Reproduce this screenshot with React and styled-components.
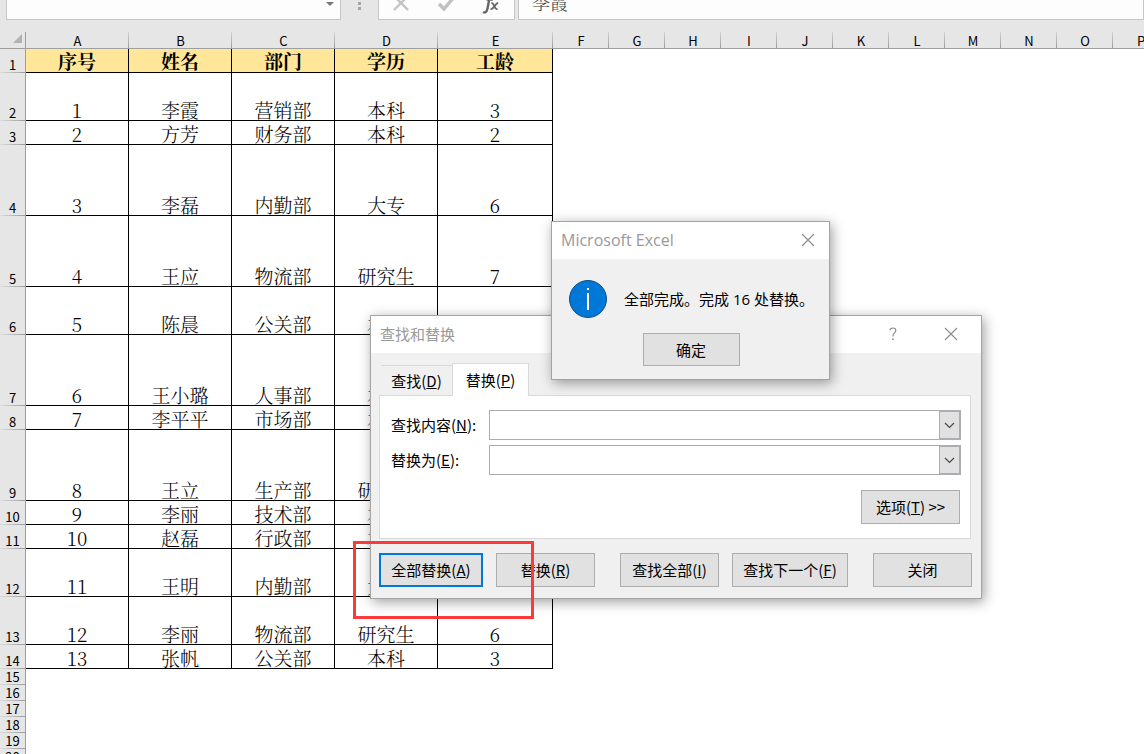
import React from "react";
import styled, { createGlobalStyle } from "styled-components";

const uiFont = `"Noto Sans CJK SC", sans-serif`;
const latinUiFont = `"Open Sans", "Noto Sans CJK SC", sans-serif`;
const cellFont = `"Noto Serif CJK SC", "Liberation Serif", "Noto Sans CJK SC", serif`;

const GlobalStyle = createGlobalStyle`
  *, *::before, *::after { box-sizing: border-box; }
  body { margin: 0; background: #fff; font-family: ${uiFont}; color: #000; }
  button, input { font: inherit; color: inherit; }
`;

const Workbook = styled.main`
  position: relative;
  height: 100vh;
  overflow: hidden;
  background: #fff;
`;

/* Formula bar */
const FormulaBar = styled.div`
  display: flex;
  align-items: flex-end;
  height: 32px;
  padding: 0 0 12px 6px;
  overflow: hidden;
  background: #e6e6e6;
`;

const BarBox = styled.div`
  display: flex;
  align-items: center;
  flex: ${(p) => (p.$width ? `0 0 ${p.$width}px` : "1 1 auto")};
  height: 35px;
  border: 1px solid #c6c6c6;
  background: #fdfdfd;
`;

const BarInput = styled.input`
  flex: 1;
  min-width: 0;
  height: 32px;
  padding: 0 0 2px 13px;
  border: 0;
  background: transparent;
  color: #444;
  font-family: ${cellFont};
  font-size: 18px;
  font-weight: 300;
  line-height: 24px;
`;

const BarButton = styled.button`
  display: flex;
  align-items: center;
  justify-content: center;
  width: ${(p) => p.$width}px;
  height: 32px;
  padding: 0;
  border: 0;
  background: transparent;
`;

const Grip = styled.svg`
  flex: 0 0 37px;
  height: 33px;
`;

const BarGap = styled.div`
  flex: 0 0 3px;
`;

/* Sheet */
const Sheet = styled.table`
  width: 1169px;
  table-layout: fixed;
  border-collapse: separate;
  border-spacing: 0;
`;

const Corner = styled.td`
  height: 17px;
  padding: 0 3px 3px 0;
  border-right: 1px solid #9f9f9f;
  border-bottom: 1px solid #9f9f9f;
  background: #e6e6e6;
  line-height: 0;
  text-align: right;
`;

const ColumnHead = styled.th`
  height: 17px;
  padding: 2px 0 0;
  border-bottom: 1px solid #9f9f9f;
  background:
    linear-gradient(#d4d4d4, #9b9b9b) right / 1px 100% no-repeat,
    #e6e6e6;
  font-size: 13px;
  font-weight: 400;
  line-height: 14px;
`;

const RowHead = styled.th`
  height: ${(p) => p.$height}px;
  padding: 0 0 1px;
  border-right: 1px solid #9f9f9f;
  background:
    linear-gradient(90deg, #dcdcdc, #9b9b9b) bottom / 100% 1px no-repeat,
    #e6e6e6;
  font-size: 13px;
  font-weight: 400;
  line-height: 15px;
  vertical-align: bottom;
`;

const Cell = styled.td`
  height: ${(p) => p.$height}px;
  padding: 0;
  border-right: 1px solid #000;
  border-bottom: 1px solid #000;
  background: ${(p) => (p.$title ? "#ffe699" : "#fff")};
  font-family: ${cellFont};
  font-size: 19px;
  font-weight: ${(p) => (p.$title ? 700 : 300)};
  line-height: ${(p) => (p.$title ? 23 : 21)}px;
  text-align: center;
  vertical-align: bottom;
`;

const Blank = styled.td`
  padding: 0;
`;

/* Dialogs */
const Window = styled.section`
  position: absolute;
  left: ${(p) => p.$left}px;
  top: ${(p) => p.$top}px;
  width: ${(p) => p.$width}px;
  border: 1px solid #a3a3a3;
  background: #f0f0f0;
  box-shadow: 2px 3px 12px rgba(0, 0, 0, 0.38);
  font-size: 15px;
  line-height: 22px;
`;

const TitleBar = styled.header`
  display: flex;
  align-items: center;
  height: 37px;
  padding: 0 0 2px 9px;
  background: #fff;
  color: #999;
`;

const WindowTitle = styled.h2`
  flex: 1;
  margin: 0;
  font-family: ${(p) => (p.$latin ? latinUiFont : uiFont)};
  font-size: ${(p) => (p.$latin ? 16 : 15)}px;
  font-weight: 400;
`;

const TitleButton = styled.button`
  display: flex;
  align-items: center;
  justify-content: center;
  width: ${(p) => p.$width}px;
  height: 35px;
  padding: 0;
  border: 0;
  background: transparent;
`;

const PushButton = styled.button`
  width: ${(p) => p.$width || 99}px;
  height: ${(p) => p.$height || 34}px;
  padding: 0;
  border: ${(p) => (p.$primary ? "2px solid #0078d7" : "1px solid #adadad")};
  background: #e1e1e1;
  line-height: 22px;
  white-space: nowrap;
`;

const FindBody = styled.div`
  padding: 10px 9px 11px 8px;
`;

const TabStrip = styled.div`
  position: relative;
  display: flex;
  align-items: flex-end;
  height: 33px;
  margin-bottom: -1px;
  padding-left: 2px;
`;

const Tab = styled.button`
  width: ${(p) => (p.$active ? 77 : 71)}px;
  height: ${(p) => (p.$active ? 33 : 30)}px;
  margin-bottom: ${(p) => (p.$active ? 0 : 1)}px;
  padding: 0;
  border: solid #d9d9d9;
  border-width: ${(p) => (p.$active ? "1px 1px 0" : "1px 0 0")};
  background: ${(p) => (p.$active ? "#fff" : "#f0f0f0")};
  line-height: 22px;
`;

const TabPanel = styled.div`
  display: grid;
  grid-template-columns: 98px 1fr;
  row-gap: 5px;
  align-items: center;
  margin-right: 1px;
  padding: 14px 9px 14px 11px;
  border: 1px solid #d9d9d9;
  background: #fff;
`;

const Combo = styled.div`
  display: flex;
  height: 30px;
  border: 1px solid #abadb3;
  background: #fff;
`;

const ComboInput = styled.input`
  flex: 1;
  min-width: 0;
  padding: 0 6px;
  border: 0;
  background: transparent;
`;

const ComboButton = styled.button`
  display: flex;
  align-items: center;
  justify-content: center;
  width: 21px;
  padding: 0;
  border: 1px solid #abadb3;
  background: #e1e1e1;
`;

const OptionsRow = styled.div`
  grid-column: 1 / -1;
  display: flex;
  justify-content: flex-end;
  padding: 10px 1px 0 0;
`;

const Actions = styled.footer`
  display: flex;
  justify-content: space-between;
  margin-top: 14px;
`;

const ActionGroup = styled.div`
  display: flex;
  gap: 13px;
`;

const MessageBody = styled.div`
  display: flex;
  flex-direction: column;
  align-items: center;
  gap: 15px;
  padding: 21px 16px 13px 17px;
`;

const Message = styled.div`
  display: flex;
  align-items: center;
  align-self: stretch;
  gap: 17px;
  white-space: nowrap;
`;

const InfoIcon = styled.svg`
  flex: none;
  width: 38px;
  height: 38px;
`;

const MessageText = styled.p`
  margin: 0;
  font-family: ${latinUiFont};
`;

const Highlight = styled.div`
  position: absolute;
  left: 353px;
  top: 541px;
  width: 181px;
  height: 78px;
  border: 3px solid #fb3a3a;
  pointer-events: none;
`;

const titles = ["序号", "姓名", "部门", "学历", "工龄"];

const rows = [
  [48, "1", "李霞", "营销部", "本科", "3"],
  [24, "2", "方芳", "财务部", "本科", "2"],
  [71, "3", "李磊", "内勤部", "大专", "6"],
  [71, "4", "王应", "物流部", "研究生", "7"],
  [48, "5", "陈晨", "公关部", "本科", "5"],
  [71, "6", "王小璐", "人事部", "本科", "4"],
  [24, "7", "李平平", "市场部", "本科", "3"],
  [71, "8", "王立", "生产部", "研究生", "5"],
  [24, "9", "李丽", "技术部", "本科", "4"],
  [24, "10", "赵磊", "行政部", "本科", "2"],
  [48, "11", "王明", "内勤部", "大专", "3"],
  [48, "12", "李丽", "物流部", "研究生", "6"],
  [24, "13", "张帆", "公关部", "本科", "3"],
];

const dataWidths = [103, 103, 103, 103, 115];
const extraColumns = "FGHIJKLMNOP".split("");
const emptyRows = [15, 16, 17, 18, 19, 20];

function CloseIcon() {
  return (
    <svg width="14" height="14" viewBox="0 0 14 14" aria-hidden="true">
      <path d="M1 1 L13 13 M13 1 L1 13" stroke="#8c8c8c" strokeWidth="1.1" fill="none" />
    </svg>
  );
}

function HelpIcon() {
  return (
    <svg width="8" height="14" viewBox="0 0 8 14" aria-hidden="true">
      <path d="M1 3.2 C1.2 0.4 6.8 0.1 6.8 3.4 C6.8 6 3.9 6 3.9 9.4" stroke="#8c8c8c" strokeWidth="1.2" fill="none" />
      <circle cx="3.9" cy="12.2" r="0.9" fill="#8c8c8c" />
    </svg>
  );
}

function ComboField({ id, label, accessKey }) {
  return (
    <>
      <label htmlFor={id}>
        {label}(<u>{accessKey}</u>):
      </label>
      <Combo>
        <ComboInput id={id} type="text" />
        <ComboButton type="button" aria-label={label}>
          <svg width="11" height="7" viewBox="0 0 11 7" aria-hidden="true">
            <path d="M1 1 L5.5 5.5 L10 1" stroke="#444" strokeWidth="1.1" fill="none" />
          </svg>
        </ComboButton>
      </Combo>
    </>
  );
}

function TopBar() {
  return (
    <FormulaBar>
      <BarBox $width={335}>
        <BarInput aria-label="名称框" type="text" />
        <BarButton $width={21} type="button" aria-label="名称">
          <svg width="8" height="12" viewBox="0 0 8 12" aria-hidden="true">
            <path d="M0 5 H8 L4 9 Z" fill="#777" />
          </svg>
        </BarButton>
      </BarBox>
      <Grip viewBox="0 0 37 33" aria-hidden="true">
        <path d="M17 15h3v3h-3z M17 20h3v3h-3z" fill="#a6a6a6" />
      </Grip>
      <BarBox $width={137}>
        <BarButton $width={43} type="button" aria-label="取消">
          <svg width="18" height="18" viewBox="0 0 18 18" aria-hidden="true">
            <path d="M2 2 L16 16 M16 2 L2 16" stroke="#c4c4c4" strokeWidth="2.4" fill="none" />
          </svg>
        </BarButton>
        <BarButton $width={48} type="button" aria-label="输入">
          <svg width="20" height="18" viewBox="0 0 20 18" aria-hidden="true">
            <path d="M3 10 L8 15 L18 3" stroke="#c0c0c0" strokeWidth="3.4" fill="none" />
          </svg>
        </BarButton>
        <BarButton $width={41} type="button" aria-label="插入函数">
          <svg width="20" height="24" viewBox="0 0 20 24" aria-hidden="true">
            <path d="M13 3.5 C10 1.5 8.8 5 8.2 8.5 L6.6 17 C6 20.5 4.4 22.2 2 21" stroke="#666" strokeWidth="2.4" fill="none" />
            <path d="M5.5 9 H12" stroke="#666" strokeWidth="1.4" />
            <path d="M10.4 12.4 C13 11 13.2 19 16.6 18 M17.2 12 C14.5 11.6 13 18.8 9.6 18" stroke="#666" strokeWidth="1.8" fill="none" />
          </svg>
        </BarButton>
      </BarBox>
      <BarGap />
      <BarBox>
        <BarInput aria-label="编辑栏" type="text" defaultValue="李霞" />
      </BarBox>
    </FormulaBar>
  );
}

function Grid() {
  return (
    <Sheet>
      <colgroup>
        <col width="26" />
        {dataWidths.map((w, i) => (
          <col key={i} width={w} />
        ))}
        {extraColumns.map((c) => (
          <col key={c} width="56" />
        ))}
      </colgroup>
      <thead>
        <tr>
          <Corner>
            <svg width="9" height="9" viewBox="0 0 9 9" aria-hidden="true">
              <path d="M9 0 V9 H0 Z" fill="#b2b2b2" />
            </svg>
          </Corner>
          {["A", "B", "C", "D", "E", ...extraColumns].map((c) => (
            <ColumnHead key={c} scope="col">{c}</ColumnHead>
          ))}
        </tr>
      </thead>
      <tbody>
        <tr>
          <RowHead $height={24} scope="row">1</RowHead>
          {titles.map((t) => (
            <Cell key={t} $height={24} $title>{t}</Cell>
          ))}
        </tr>
        {rows.map(([height, ...values], r) => (
          <tr key={r}>
            <RowHead $height={height} scope="row">{r + 2}</RowHead>
            {values.map((v, i) => (
              <Cell key={i} $height={height}>{v}</Cell>
            ))}
          </tr>
        ))}
        {emptyRows.map((n) => (
          <tr key={n}>
            <RowHead $height={16} scope="row">{n}</RowHead>
            <Blank colSpan={16} />
          </tr>
        ))}
      </tbody>
    </Sheet>
  );
}

function FindDialog() {
  return (
    <Window role="dialog" aria-labelledby="find-title" $left={370} $top={315} $width={612}>
      <TitleBar>
        <WindowTitle id="find-title">查找和替换</WindowTitle>
        <TitleButton $width={56} type="button" aria-label="帮助"><HelpIcon /></TitleButton>
        <TitleButton $width={60} type="button" aria-label="关闭"><CloseIcon /></TitleButton>
      </TitleBar>
      <FindBody>
        <TabStrip role="tablist">
          <Tab role="tab" type="button" aria-selected="false">查找(<u>D</u>)</Tab>
          <Tab role="tab" type="button" aria-selected="true" $active>替换(<u>P</u>)</Tab>
        </TabStrip>
        <TabPanel role="tabpanel">
          <ComboField id="find-what" label="查找内容" accessKey="N" />
          <ComboField id="replace-with" label="替换为" accessKey="E" />
          <OptionsRow>
            <PushButton type="button">选项(<u>T</u>) &gt;&gt;</PushButton>
          </OptionsRow>
        </TabPanel>
        <Actions>
          <ActionGroup>
            <PushButton type="button" $width={104} $primary>全部替换(<u>A</u>)</PushButton>
            <PushButton type="button">替换(<u>R</u>)</PushButton>
          </ActionGroup>
          <ActionGroup>
            <PushButton type="button">查找全部(<u>I</u>)</PushButton>
            <PushButton type="button" $width={116}>查找下一个(<u>F</u>)</PushButton>
          </ActionGroup>
          <PushButton type="button">关闭</PushButton>
        </Actions>
      </FindBody>
    </Window>
  );
}

function MessageDialog() {
  return (
    <Window role="alertdialog" aria-labelledby="msg-title" $left={551} $top={221} $width={279}>
      <TitleBar>
        <WindowTitle id="msg-title" $latin>Microsoft Excel</WindowTitle>
        <TitleButton $width={42} type="button" aria-label="关闭"><CloseIcon /></TitleButton>
      </TitleBar>
      <MessageBody>
        <Message>
          <InfoIcon viewBox="0 0 38 38" aria-hidden="true">
            <circle cx="19" cy="19" r="18.5" fill="#0078d7" stroke="#0f4f86" />
            <path d="M18 8h2v2h-2z M18 13h2v17h-2z" fill="#fff" />
          </InfoIcon>
          <MessageText>全部完成。完成 16 处替换。</MessageText>
        </Message>
        <PushButton type="button" $width={97} $height={33}>确定</PushButton>
      </MessageBody>
    </Window>
  );
}

export default function App() {
  return (
    <>
      <GlobalStyle />
      <Workbook>
        <TopBar />
        <Grid />
        <FindDialog />
        <MessageDialog />
        <Highlight />
      </Workbook>
    </>
  );
}
